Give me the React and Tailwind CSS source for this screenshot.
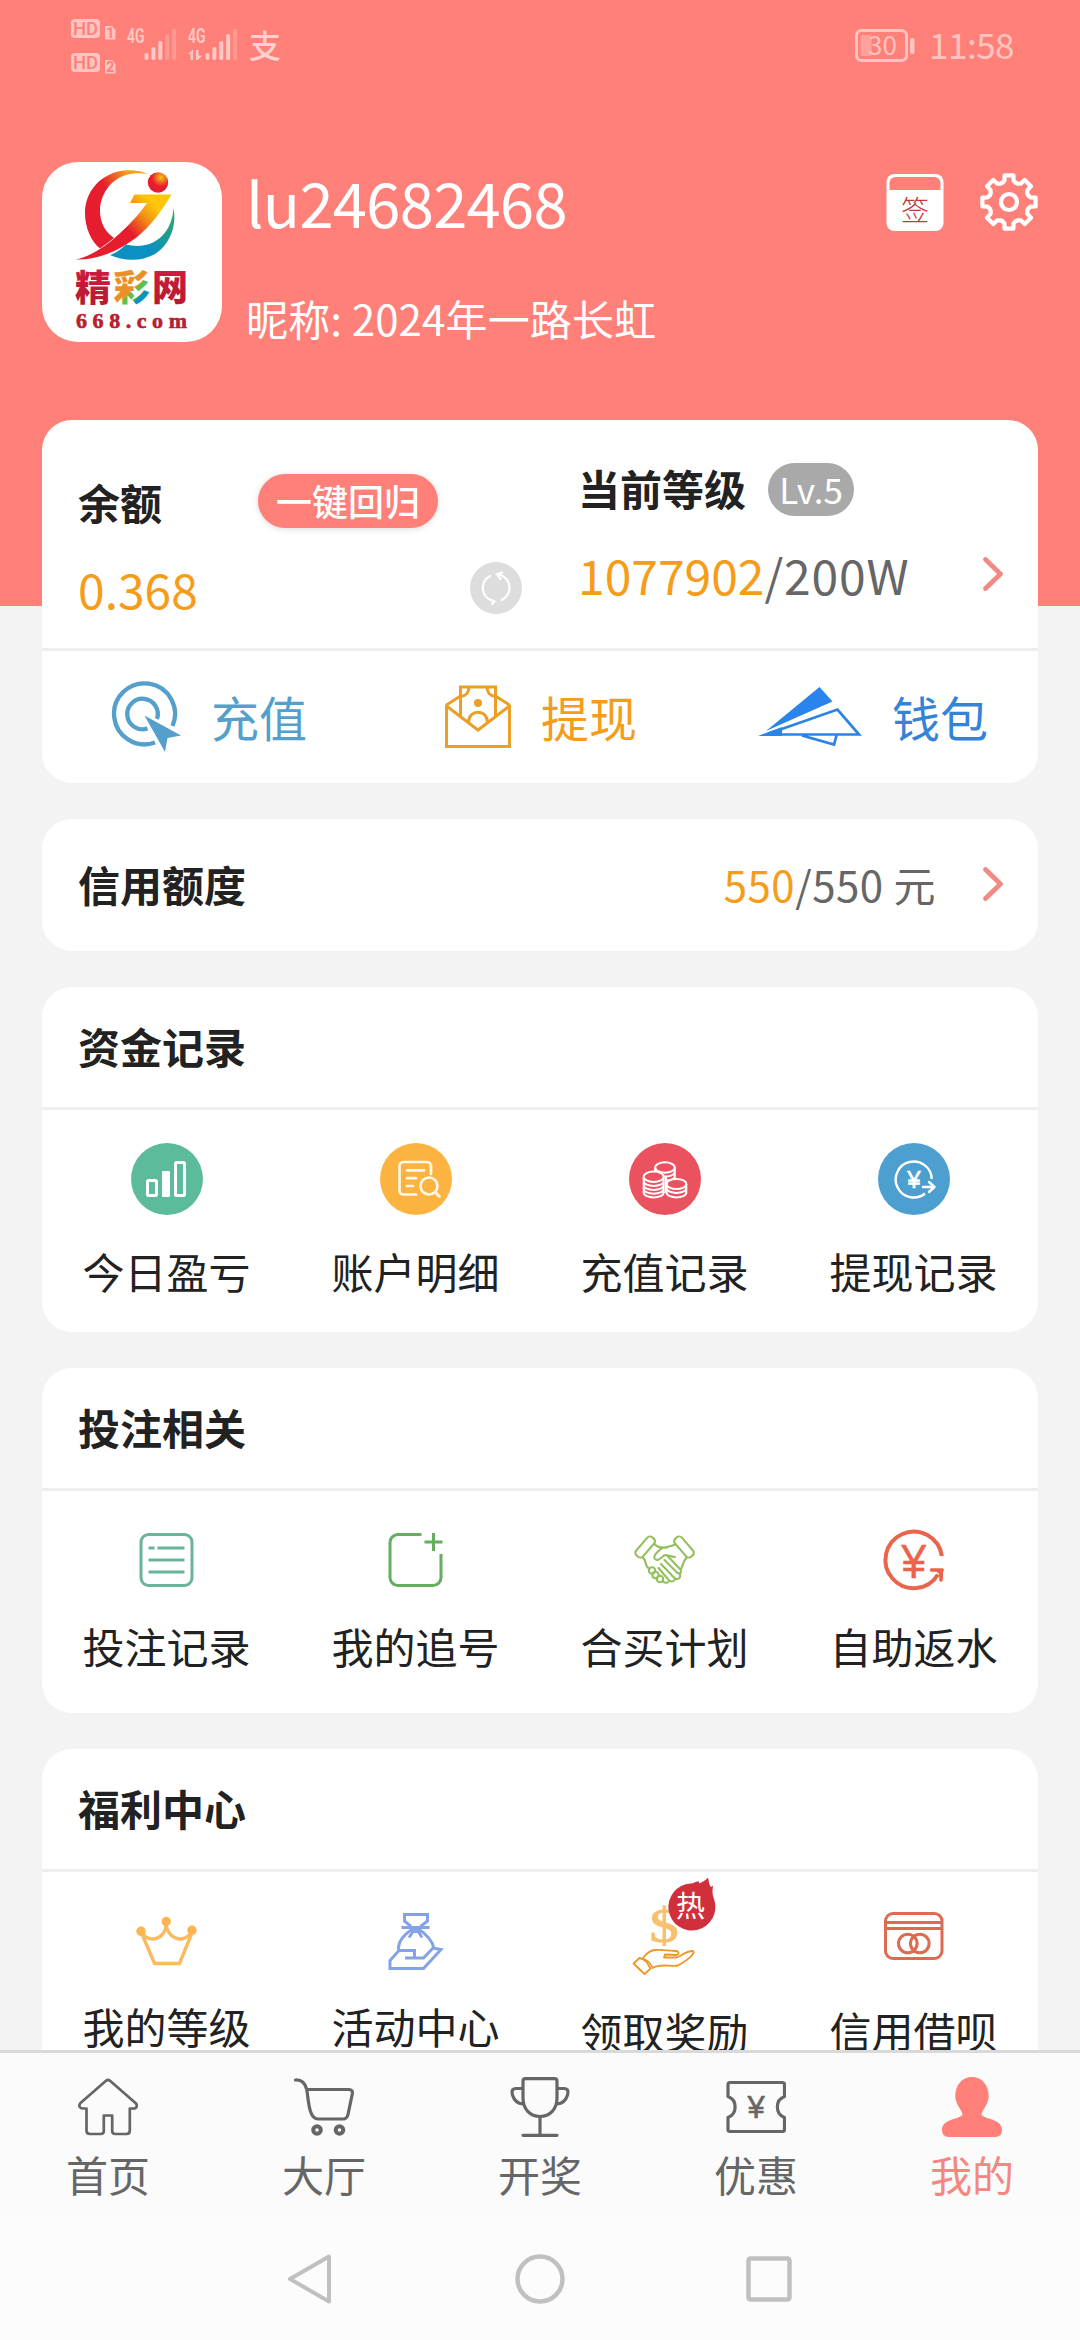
import { useState } from "react";

const GEAR = (() => {
    const pts = [];
    for (let i = 0; i < 8; i++) {
        const a = (i * Math.PI) / 4;
        [[-6.6, -19.2], [-4.6, -21.5], [-4.4, -26.6], [4.4, -26.6], [4.6, -21.5], [6.6, -19.2]].forEach(([x, y]) => {
            pts.push(`${(29 + x * Math.cos(a) - y * Math.sin(a)).toFixed(2)} ${(29 + x * Math.sin(a) + y * Math.cos(a)).toFixed(2)}`);
        });
    }
    return `M${pts.join("L")}Z`;
})();

const Chevron = () => (
    <svg width="22" height="36" viewBox="0 0 22 36" fill="none" stroke="#f08a84" strokeWidth="4.8" strokeLinecap="round" strokeLinejoin="round">
        <path d="M3.500 3.500L18.500 18L3.500 32.500" />
    </svg>
);

const HdBadge = ({ sim }) => (
    <svg width="46" height="21" viewBox="0 0 46 21" overflow="visible" className="block overflow-visible">
        <rect x="0" y="0" width="29" height="19" rx="4" fill="#ffc4c0" />
        <text x="14.500" y="15.800" textAnchor="middle" fontSize="18.500" fontWeight="500" fontFamily="Roboto, sans-serif" fill="#ff8079">HD</text>
        <path d="M34 7h7l3.500 4v9.500h-10.500z" fill="#ffc4c0" />
        <text x="39.300" y="18.700" textAnchor="middle" fontSize="14" fontWeight="700" fontFamily="Roboto, sans-serif" fill="#ff8079">{sim}</text>
    </svg>
);

const Signal = ({ level, data }) => (
    <svg width="50" height="34" viewBox="0 0 50 34" fill="#ffc8c4" overflow="visible" className="block overflow-visible">
        <text x="0" y="14" fontSize="20" fontWeight="600" textLength="17.5" lengthAdjust="spacingAndGlyphs" fontFamily="Roboto, sans-serif">4G</text>
        {data && <path d="M0 25l5-4.500v10.500h-2.500v-6zM8 21h2.500v5.500l4 0l-5 4.500h-1.500z" />}
        {[7, 13, 19, 26, 31].map((h, i) => (
            <rect key={h} x={17.5 + i * 6.9} y={31 - h} width="4" height={h} rx="1.800" opacity={i < level ? 1 : 0.35} />
        ))}
    </svg>
);

const Logo = () => (
    <svg width="180" height="180" viewBox="0 0 180 180">
        <defs>
            <linearGradient id="swoosh" gradientUnits="userSpaceOnUse" x1="60" y1="72" x2="112" y2="22">
                <stop offset="0.300" stopColor="#e51d2e" />
                <stop offset="0.600" stopColor="#f39413" />
                <stop offset="0.800" stopColor="#fdc60b" />
            </linearGradient>
            <linearGradient id="ring" gradientUnits="userSpaceOnUse" x1="52" y1="30" x2="92" y2="8">
                <stop offset="0.250" stopColor="#e51d2e" />
                <stop offset="0.850" stopColor="#f6a01a" />
            </linearGradient>
            <linearGradient id="blue" x1="0" y1="1" x2="1" y2="0">
                <stop offset="0.400" stopColor="#0a90c2" />
                <stop offset="1" stopColor="#37a85a" />
            </linearGradient>
            <radialGradient id="ball" cx="0.650" cy="0.250" r="0.700">
                <stop offset="0" stopColor="#fcc40c" />
                <stop offset="0.650" stopColor="#e51d2e" />
            </radialGradient>
            <linearGradient id="red" x1="0" y1="0" x2="0" y2="1">
                <stop offset="0" stopColor="#d61b48" />
                <stop offset="1" stopColor="#b01b2b" />
            </linearGradient>
            <linearGradient id="multi" gradientUnits="userSpaceOnUse" x1="78" y1="112" x2="106" y2="142">
                <stop offset="0.500" stopColor="#e99029" />
                <stop offset="0.520" stopColor="#5cc04a" />
                <stop offset="0.700" stopColor="#5cc04a" />
                <stop offset="0.720" stopColor="#0f93bd" />
            </linearGradient>
        </defs>
        <path d="M106 12C98 8 84 7 74 10C55 16 43 32 43 51C43 66 49 79 58 86.500L72 76C63 70 58 60 58 49C58 33 68 18 84 13C91 11 99 11 106 12Z" fill="url(#ring)" />
        <path d="M92.500 32.500H129.500C118 52 104 70 88 80C73 90 55 98 34 97.500C49 94 62 85 72 76.500C85 65 96 54 105 41H88Z" fill="url(#swoosh)" />
        <circle cx="116" cy="20.500" r="10.200" fill="url(#ball)" />
        <path d="M131.500 46C135 64 128 82 113 92C99 100 81 99 68 93C74 91 79 87 84 82.500C98 86 111 83 120 74C127 67 131 57 131.500 46Z" fill="url(#blue)" />
        <g fontSize="36" fontWeight="900">
            <text x="33" y="138.500" fill="url(#red)">精</text>
            <text x="71.500" y="138.500" fill="url(#multi)">彩</text>
            <text x="110" y="138.500" fill="url(#red)">网</text>
        </g>
        <text x="34" y="165.500" fontSize="22" fontWeight="700" textLength="111" fill="#b9202f" stroke="#b9202f" strokeWidth="0.600" fontFamily="Liberation Serif, serif">668.com</text>
    </svg>
);

const Icon = ({ color, children, width = 3 }) => (
    <svg width="72" height="72" viewBox="0 0 72 72" fill="none" stroke={color} strokeWidth={width} overflow="visible" className="block overflow-visible">
        {children}
    </svg>
);

const Profit = () => (
    <Icon color="#fff">
        <circle cx="36" cy="36" r="36" fill="#5cbb9a" stroke="none" />
        <rect x="16.500" y="37.500" width="9" height="15" rx="1" />
        <rect x="31" y="28" width="8" height="26" rx="1" fill="#fff" stroke="none" />
        <rect x="44.500" y="19.500" width="9" height="33" rx="1" />
    </Icon>
);

const Detail = () => (
    <Icon color="#fff8e6" width={2.7}>
        <circle cx="36" cy="36" r="36" fill="#fdb340" stroke="none" />
        <g strokeLinecap="round">
            <path d="M51 31V23a4 4 0 0 0-4-4H23.500a4 4 0 0 0-4 4V47.500a4 4 0 0 0 4 4H36" />
            <path d="M27 27.300H44M27 35.200H36M27 43H33" />
            <circle cx="49" cy="43" r="8.500" />
            <path d="M55.500 49.500L59.500 53.500" />
        </g>
    </Icon>
);

const Coins = () => (
    <Icon color="#fff" width={2}>
        <circle cx="36" cy="36" r="36" fill="#ea525f" stroke="none" />
        <ellipse cx="36" cy="24.500" rx="9.800" ry="5.200" />
        <path d="M26.200 24.500V29M45.800 24.500V36M34 33.500C40 34 45 32 45.800 29.500M36 37.500C41 37.500 45 36 45.800 33.500M37 33V50" />
        <ellipse cx="24.700" cy="33.700" rx="10" ry="5.200" />
        <path d="M14.700 33.700V49.500C14.700 56 34.700 56 34.700 49.500V33.700M14.700 38C14.700 44.500 34.700 44.500 34.700 38M14.700 42C14.700 48.500 34.700 48.500 34.700 42M14.700 45.800C14.700 52.300 34.700 52.300 34.700 45.800" />
        <ellipse cx="47.500" cy="41" rx="9.800" ry="5" />
        <path d="M37.700 41V49.500C37.700 56 57.300 56 57.300 49.500V41M37.700 45C37.700 51.500 57.300 51.500 57.300 45" />
    </Icon>
);

const Withdraw = () => (
    <Icon color="#fff" width={2.4}>
        <circle cx="36" cy="36" r="36" fill="#4d9fd0" stroke="none" />
        <path d="M53.700 36A18 18 0 1 0 47 50.500" />
        <path d="M45 44H56M51 39L56.500 44L51 49" strokeLinecap="round" strokeLinejoin="round" />
        <text x="36" y="44.500" textAnchor="middle" fontSize="24" fontFamily="Liberation Sans, sans-serif" fill="#fff" strokeWidth="0.600">¥</text>
    </Icon>
);

const BetList = () => (
    <Icon color="#69b49c">
        <rect x="10" y="10.500" width="51" height="51" rx="7.500" />
        <path d="M17.500 24H23.500M26.500 24H53.500M17.500 36H53.500M17.500 48H53.500" />
    </Icon>
);

const Chase = () => (
    <Icon color="#65ad5f">
        <path d="M41.500 10.500H18a8 8 0 0 0-8 8V53.500a8 8 0 0 0 8 8H53a8 8 0 0 0 8-8V30M53.500 9V27M44.500 18H62.500" />
    </Icon>
);

const Handshake = () => (
    <Icon color="#93bf5d" width={2.1}>
        <g strokeLinecap="round" strokeLinejoin="round">
            <rect x="11.700" y="11" width="9" height="24" rx="3.500" transform="rotate(41 16.200 23)" />
            <rect x="50.500" y="11" width="9" height="24" rx="3.500" transform="rotate(-41 55 23)" />
            <path d="M26 20.500C29 24 33 24 38 23.500M46 20.500C41 23.500 35 22 31 25.500C28 28.500 24 31 25.500 34.500C28 38 32 34 35 31.500C38 30 41 33 46 33" />
            <path d="M13.500 33.500C18 36 15 42 20.500 45M58 33.500C54 36 54.500 41 52 45" />
            <path d="M39 32.500L51.500 45.500C53.500 49 49.500 50.500 47.500 48L35.500 36M51 50C52 55 47.500 57 44.500 53L32 40M46 55.500C44 58.500 40.500 58 38.500 54.500L29.500 44" />
            <circle cx="23" cy="46.500" r="3.200" />
            <circle cx="26.500" cy="51" r="3.200" />
            <circle cx="31" cy="55" r="3.200" />
            <path d="M34 57.500C36.500 59.500 39.500 59 40 57" />
        </g>
    </Icon>
);

const Rebate = () => (
    <Icon color="#ea634a" width={4}>
        <path d="M63.800 32A28.300 28.300 0 1 0 60 50.500" />
        <path d="M53.500 46H64.200M63 46V56" strokeLinecap="round" strokeWidth="3.600" />
        <path d="M57 46H65V54Z" fill="#ea634a" stroke="none" />
        <text x="35.800" y="54" textAnchor="middle" fontSize="48" textLength="25" lengthAdjust="spacingAndGlyphs" fontFamily="Liberation Sans, sans-serif" fill="#ea634a" strokeWidth="0.400">¥</text>
    </Icon>
);

const Crown = () => (
    <Icon color="#fabb60" width={3.4}>
        <path d="M11 29L23.500 58.500H48.500L60.500 29M11.500 28.500C20 39 34 33 35.200 20C37 33 51 39 59.500 28.500" />
        <g fill="#fab450" stroke="none">
            <circle cx="35.200" cy="16.500" r="4.700" />
            <circle cx="10" cy="26.300" r="4.700" />
            <circle cx="61" cy="25.300" r="4.700" />
        </g>
    </Icon>
);

const Activity = () => (
    <Icon color="#84a3e6" width={3}>
        <path d="M31 21.500L24.500 16V9.500H47.500V16L40.500 21.500M21.500 22.500H49.500M34.500 23C24 29 18 36 18.500 45M37 23C48 30 53 37 54 44M35.500 23L29 32.500M36 23L42 32.500M35.700 23V28" />
        <path d="M34.500 52.500V45.500H19L10 55.500V63.500H43.500L61 44.500L53 43L43.500 53H25" />
    </Icon>
);

const Reward = () => (
    <Icon color="#ee9626" width={1.8}>
        <text x="35" y="37" textAnchor="middle" fontSize="49" textLength="29" lengthAdjust="spacingAndGlyphs" fontFamily="Liberation Serif, serif" fill="#f7c170" stroke="#f7c170" strokeWidth="1">$</text>
        <g strokeLinejoin="round">
            <path d="M10.500 53L4.500 58.500L15.500 69L21.500 63.500L20 61C18 56 15 54 10.500 53Z" />
            <path d="M13.500 53.500C17 49 20 46 25 45C31 44 35 46 47 46C50 46.500 50.500 49 48 50L36 49.500L35 52.500L48 52.500C53 51 56 46 64 46C67 48 60 54 49 60.500C42 62 31 58 23.500 63C22 59 19 55 13.500 53.500Z" />
        </g>
        <path d="M61.500 -21.500C65 -21 66 -24 70 -23.500L70 -21.500C73 -23 76 -24 79 -27.500C80 -23 80 -20 82 -18L84 -19.500C83.500 -14 83 -12 85 -6A23.500 23.500 0 1 1 61.500 -21.500Z" fill="#d0303c" stroke="none" />
        <text x="61.500" y="12" textAnchor="middle" fontSize="29" fontWeight="400" fill="#fff" stroke="none">热</text>
    </Icon>
);

const Credit = () => (
    <Icon color="#de6a50" width={3}>
        <rect x="7.500" y="8.500" width="56.500" height="45" rx="7.500" />
        <path d="M7.500 17.500H64M7.500 23.500H64" />
        <circle cx="29.800" cy="38.500" r="9.300" />
        <circle cx="41.800" cy="38.500" r="9.300" />
    </Icon>
);

const TabIcon = ({ children }) => (
    <svg width="60" height="60" viewBox="0 0 60 60" fill="none" stroke="#666" strokeWidth="3.2" strokeLinecap="round" strokeLinejoin="round" className="block">
        {children}
    </svg>
);

const tabs = [
    {
        name: "首页",
        icon: (
            <TabIcon>
                <path strokeWidth="2.700" d="M28 3.800Q30 2.200 32 3.800L57.500 26C60.500 29 58 31.800 55 31.500H51.800V53.500Q51.800 57 48.500 57H37.500Q34.200 57 34.200 54V38.500H25.800V54Q25.800 57 22.500 57H12Q8.500 57 8.500 53.500V31.500H5C2 31.500 0 29 2.500 26Z" />
            </TabIcon>
        ),
    },
    {
        name: "大厅",
        icon: (
            <TabIcon>
                <path d="M1.500 3C8 2.500 11 6 12.800 12.500H55Q59 12.500 58.300 17L54 37.500Q53 42 49 42H24C15 42 14.500 24 12.800 12.500" />
                <circle cx="23" cy="53" r="3.800" strokeWidth="4" />
                <circle cx="45.500" cy="53" r="3.800" strokeWidth="4" />
            </TabIcon>
        ),
    },
    {
        name: "开奖",
        icon: (
            <TabIcon>
                <path d="M15.500 1.600H44.500Q47 1.600 47 4V21C47 32 40 39.500 30 39.500C20 39.500 13 32 13 21V4Q13 1.600 15.500 1.600ZM13 11.500H6C2 11.500 1.500 14 2.500 18C4 23 7 26.500 13 27M47 11.500H54C58 11.500 58.500 14 57.500 18C56 23 53 26.500 47 27M30 39.500V58M13 58.300H47" />
            </TabIcon>
        ),
    },
    {
        name: "优惠",
        icon: (
            <TabIcon>
                <path d="M4 5.500H56.500Q58.500 5.500 58.500 7.500V19.500C49 23 49 37 58.500 40.500V52.500Q58.500 54.500 56.500 54.500H4Q2 54.500 2 52.500V40.500C11.500 37 11.500 23 2 19.500V7.500Q2 5.500 4 5.500Z" />
                <text x="30" y="41" textAnchor="middle" fontSize="31" fontFamily="Liberation Sans, sans-serif" fill="#666" strokeWidth="0.600">¥</text>
            </TabIcon>
        ),
    },
    {
        name: "我的",
        icon: (
            <TabIcon>
                <path stroke="none" fill="#ff8079" d="M30 0C40 0 46.700 8 46.700 19C46.700 28 39.500 33 39.500 38C45 43 60 42 60 53Q60 60 53 60H7Q0 60 0 53C0 42 15 43 20.500 38C20.500 33 13.300 28 13.300 19C13.300 8 20 0 30 0Z" />
            </TabIcon>
        ),
    },
];

const sections = [
    {
        title: "资金记录",
        labelClass: "mt-[20px]",
        items: [
            { name: "今日盈亏", icon: <Profit /> },
            { name: "账户明细", icon: <Detail /> },
            { name: "充值记录", icon: <Coins /> },
            { name: "提现记录", icon: <Withdraw /> },
        ],
    },
    {
        title: "投注相关",
        labelClass: "mt-[14px]",
        items: [
            { name: "投注记录", icon: <BetList /> },
            { name: "我的追号", icon: <Chase /> },
            { name: "合买计划", icon: <Handshake /> },
            { name: "自助返水", icon: <Rebate /> },
        ],
    },
    {
        title: "福利中心",
        labelClass: "mt-[13px]",
        items: [
            { name: "我的等级", icon: <Crown /> },
            { name: "活动中心", icon: <Activity /> },
            { name: "领取奖励", icon: <Reward />, labelClass: "mt-[18px]" },
            { name: "信用借呗", icon: <Credit />, labelClass: "mt-[17px]" },
        ],
    },
];

const Section = ({ title, items, labelClass }) => (
    <section className="h-[345px] shrink-0 rounded-[30px] bg-white">
        <h2 className="flex h-[123px] items-center border-b-[3px] border-[#eee] px-9 pb-[3px] font-bold">{title}</h2>
        <div className="grid grid-cols-4 pt-[33px]">
            {items.map((item) => (
                <div key={item.name} className="flex flex-col items-center">
                    {item.icon}
                    <span className={`${item.labelClass || labelClass} leading-[72px]`}>{item.name}</span>
                </div>
            ))}
        </div>
    </section>
);

export default function App() {

    const [active, setActive] = useState("我的");

    return (
        <div className="flex h-[2340px] w-[1080px] flex-col overflow-hidden bg-[#f3f3f3] font-['Noto_Sans_CJK_SC',sans-serif] text-[42px] text-[#222]">
            <header className="h-[606px] shrink-0 bg-[#ff8079] text-white">
                <div className="flex h-[92px] items-center justify-between pr-[66px] pl-[71px]">
                    <div className="flex items-center">
                        <div className="flex flex-col gap-[13px]">
                            <HdBadge sim={1} />
                            <HdBadge sim={2} />
                        </div>
                        <div className="flex items-center gap-[11px] pl-[10px]">
                            <Signal level={3} />
                            <Signal level={4} data />
                            <span className="-mt-[5px] text-[32px] leading-[48px] font-medium text-[#ffd2cf]">支</span>
                        </div>
                    </div>
                    <div className="flex items-center gap-[14px] text-[#ffc4c0]">
                        <svg width="60" height="34" viewBox="0 0 60 34" className="block overflow-visible">
                            <rect x="1.500" y="1.500" width="50" height="30" rx="5" fill="none" stroke="#ffc4c0" strokeWidth="3" />
                            <rect x="5.500" y="6" width="11" height="21" rx="2" fill="#ffa29d" />
                            <text x="27.500" y="26" textAnchor="middle" fontSize="26" fill="#ffc4c0">30</text>
                            <rect x="55" y="9" width="4.500" height="16" rx="2" fill="#ffc4c0" />
                        </svg>
                        <span className="-mt-[4px] text-[35px] leading-[52px] tracking-[-0.5px]">11:58</span>
                    </div>
                </div>

                <div className="flex items-start pt-[70px] pr-[42px] pl-[42px]">
                    <div className="h-[180px] w-[180px] rounded-[36px] bg-white">
                        <Logo />
                    </div>
                    <div className="ml-[24px] flex flex-1 flex-col">
                        <span className="text-[61.5px] leading-[80px] tracking-[-0.7px]">lu24682468</span>
                        <span className="mt-[45px] leading-[62px] tracking-[0.15px]">昵称: 2024年一路长虹</span>
                    </div>
                    <div className="flex gap-[36px] pt-[11px]">
                        <svg width="58" height="58" viewBox="0 0 58 58">
                            <rect x="0.500" y="1" width="57" height="57" rx="8" fill="#fff" />
                            <path d="M3.500 17V10a6 6 0 0 1 6-6H48.500a6 6 0 0 1 6 6V17Z" fill="#ff8079" />
                            <text x="29" y="48" textAnchor="middle" fontSize="28" fontWeight="300" fill="#bb3a36">签</text>
                        </svg>
                        <svg width="58" height="58" viewBox="0 0 58 58" fill="none" stroke="#fff" strokeWidth="4.200" strokeLinejoin="round" overflow="visible">
                            <path d={GEAR} />
                            <circle cx="29" cy="29" r="8" />
                        </svg>
                    </div>
                </div>
            </header>

            <main className="-mt-[186px] flex min-h-0 flex-1 flex-col gap-9 overflow-hidden px-[42px]">
                <section className="h-[363px] shrink-0 rounded-[30px] bg-white">
                    <div className="flex h-[231px] border-b-[3px] border-[#eee]">
                        <div className="flex w-[498px] flex-col pt-[51px] pr-[18px] pl-9">
                            <div className="flex h-[60px] items-center">
                                <span className="font-bold">余额</span>
                                <button className="ml-[96px] flex h-[54px] w-[180px] items-center justify-center rounded-full bg-[#ff8079] pb-[2px] text-[36px] font-medium text-white shadow-[0_1px_6px_rgba(0,0,0,0.15)]">
                                    一键回归
                                </button>
                            </div>
                            <div className="mt-[27px] flex h-[60px] items-center justify-between">
                                <span className="text-[48px] text-[#f59d1a]">0.368</span>
                                <svg width="52" height="52" viewBox="0 0 52 52" fill="none" stroke="#fff" strokeWidth="2.200" strokeLinecap="round">
                                    <circle cx="26" cy="26" r="26" fill="#ddd" stroke="none" />
                                    <path d="M20 14A13.500 13.500 0 0 0 23 39M31.500 38A13.500 13.500 0 0 0 29 12.500M19.500 37L24.500 39.500L22 42M32 10.500L27 12.500L30.500 17" />
                                </svg>
                            </div>
                        </div>
                        <div className="flex w-[498px] flex-col pt-[37px] pr-[34px] pl-[38px]">
                            <div className="flex h-[60px] items-center gap-[22px]">
                                <span className="font-bold">当前等级</span>
                                <span className="mt-[5px] flex h-[53px] w-[86px] items-center justify-center rounded-full bg-[#a9a9a9] text-[35px] text-white">Lv.5</span>
                            </div>
                            <div className="mt-[27px] flex h-[60px] items-center justify-between text-[48px] text-[#666]">
                                <span><span className="text-[#f59d1a]">1077902</span><span className="tracking-[0.8px]">/200W</span></span>
                                <Chevron />
                            </div>
                        </div>
                    </div>
                    <div className="grid h-[132px] grid-cols-3 pb-[3px] text-[48px]">
                        <div className="flex items-center justify-center gap-[30px] text-[#549fcb]">
                            <svg width="72" height="72" viewBox="0 0 72 72" fill="none" stroke="currentColor" strokeWidth="4.300" className="mt-[3px]">
                                <path d="M63.500 45A30.500 30.500 0 1 0 46 61.500" />
                                <path d="M48 38A15.300 15.300 0 1 0 38.500 47.500" />
                                <path d="M35.500 34.500L72 54.500L58.500 57L56 71Z" fill="currentColor" stroke="none" />
                            </svg>
                            充值
                        </div>
                        <div className="flex items-center justify-center gap-[30px] pl-[2px] text-[#f59d1a]">
                            <svg width="66" height="64" viewBox="0 0 66 64" fill="none" stroke="#eb9f28" strokeWidth="3" className="mt-[3px]">
                                <path d="M1.500 19.500V61.500H64.500V19.500M1.500 21L33 45L64.500 21M15.500 11L1.500 20M50.500 11L64.500 20M15.500 32V2H50.500V32M24 2C24 7 21 11 15.500 11.500M42 2C42 7 45 11 50.500 11.500M23.500 37C24 24 42 24 42.500 37" />
                                <circle cx="33" cy="18" r="4" fill="#eb9f28" stroke="none" />
                            </svg>
                            提现
                        </div>
                        <div className="flex items-center justify-center gap-[30px] pl-[2px] text-[#3583d6]">
                            <svg width="104" height="62" viewBox="0 0 104 62" fill="none" stroke="#2b84e3" strokeWidth="2.700" className="mt-[3px]">
                                <path d="M61.500 1L74.500 15.500L8 45Z" fill="#2a84ee" stroke="none" />
                                <path d="M8 48.500L79.500 23.500L101 48.500ZM44 49.500L76 58.500L78.500 49.500" />
                                <path d="M0 50L24 41V50Z" fill="#2a84ee" stroke="none" />
                            </svg>
                            钱包
                        </div>
                    </div>
                </section>

                <section className="flex h-[132px] shrink-0 items-center justify-between rounded-[30px] bg-white pr-[34px] pb-[3px] pl-9">
                    <span className="font-bold">信用额度</span>
                    <div className="flex items-center gap-[46px] text-[#666]">
                        <span className="tracking-[0.5px]"><span className="text-[#f59d1a]">550</span>/550 元</span>
                        <Chevron />
                    </div>
                </section>

                {sections.map((section) => (
                    <Section key={section.title} {...section} />
                ))}
            </main>

            <footer className="h-[290px] shrink-0 border-t-[3px] border-[#d9d9d9] bg-[#fbfbfb]">
                <nav className="grid h-[164px] grid-cols-5 pt-6">
                    {tabs.map((tab) => (
                        <button key={tab.name} className="flex flex-col items-center" onClick={() => setActive(tab.name)}>
                            {tab.icon}
                            <span className={`mt-[6px] leading-[62px] ${active === tab.name ? "text-[#f4877f]" : "text-[#666]"}`}>{tab.name}</span>
                        </button>
                    ))}
                </nav>
                <div className="flex h-[123px] items-center justify-center gap-[180px] bg-[#fcfcfc]">
                    <svg width="50" height="50" viewBox="0 0 50 50" fill="none" stroke="#c0c0c0" strokeWidth="4" strokeLinejoin="round">
                        <path d="M44 2.500V47.500L5 25Z" />
                    </svg>
                    <svg width="50" height="50" viewBox="0 0 50 50" fill="none" stroke="#c0c0c0" strokeWidth="4.500">
                        <circle cx="25" cy="25" r="22.500" />
                    </svg>
                    <svg width="50" height="50" viewBox="0 0 50 50" fill="none" stroke="#c0c0c0" strokeWidth="4.500">
                        <rect x="3.500" y="4.500" width="41" height="41" rx="2" />
                    </svg>
                </div>
            </footer>
        </div>
    );
}
